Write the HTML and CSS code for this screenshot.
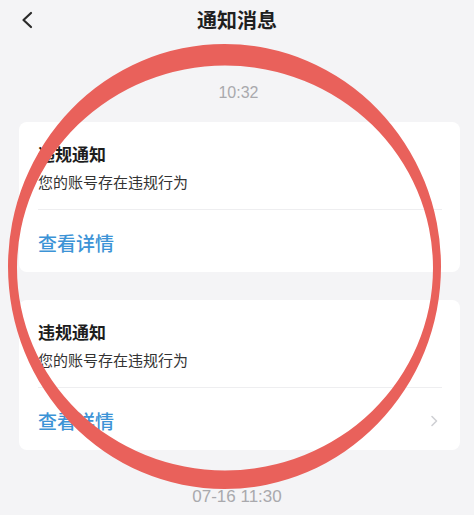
FILE: index.html
```html
<!DOCTYPE html>
<html lang="zh">
<head>
<meta charset="utf-8">
<link rel="stylesheet" href="styles.css">
</head>
<body>
<div class="page">
  <header class="header">
    <div class="back">
      <svg width="14" height="18" viewBox="0 0 14 18"><path d="M11 2 L3.5 9 L11 16" fill="none" stroke="#2a2a2a" stroke-width="2.2" stroke-linecap="round" stroke-linejoin="round"/></svg>
    </div>
    <h1 class="title">通知消息</h1>
    <div></div>
  </header>

  <div class="time first">10:32</div>

  <div class="card">
    <div class="card-title">违规通知</div>
    <div class="card-desc">您的账号存在违规行为</div>
    <div class="divider"></div>
    <div class="link-row"><span class="link">查看详情</span></div>
  </div>

  <div class="card second">
    <div class="card-title">违规通知</div>
    <div class="card-desc">您的账号存在违规行为</div>
    <div class="divider"></div>
    <div class="link-row"><span class="link">查看详情</span>
      <svg class="chev" width="8" height="12" viewBox="0 0 8 12"><path d="M2 1.5 L6.5 6 L2 10.5" fill="none" stroke="#cfd0d4" stroke-width="1.6" stroke-linecap="round" stroke-linejoin="round"/></svg>
    </div>
  </div>

  <div class="time last">07-16 11:30</div>

  <svg class="circle" width="474" height="515" viewBox="0 0 474 515">
    <path fill="#e9615b" fill-rule="evenodd" d="M8 266.5 A216.5 222.5 0 1 0 441 266.5 A216.5 222.5 0 1 0 8 266.5 Z M17 268 A208 202.5 0 1 1 433 268 A208 202.5 0 1 1 17 268 Z"/>
  </svg>
</div>
</body>
</html>
```
FILE: styles.css
```css
html, body {
  margin: 0;
  padding: 0;
}
body {
  background: #f4f4f6;
  font-family: "Noto Sans CJK SC", "Noto Sans", sans-serif;
  width: 474px;
  height: 515px;
  overflow: hidden;
}
.page {
  position: relative;
  width: 474px;
  height: 515px;
}
.header {
  height: 40px;
  display: grid;
  grid-template-columns: 1fr auto 1fr;
  align-items: center;
}
.back {
  padding-left: 20px;
  display: flex;
  align-items: center;
  height: 40px;
}
.title {
  margin: 0;
  font-size: 20px;
  font-weight: 700;
  color: #1f1f1f;
  line-height: 40px;
}
.time {
  text-align: center;
  color: #a9a9ad;
  font-family: "Liberation Sans", "Noto Sans CJK SC", sans-serif;
  font-size: 16px;
  line-height: 20px;
}
.time.first {
  margin-top: 43px;
  padding-left: 3px;
}
.time.last {
  margin-top: 37px;
  font-size: 17px;
}
.card {
  margin: 19px 14px 0 19px;
  background: #ffffff;
  border-radius: 8px;
  padding: 21px 18px 16px 19px;
}
.card.second {
  margin-top: 28px;
}
.card-title {
  font-size: 17px;
  font-weight: 700;
  line-height: 22px;
  color: #1d1d1d;
}
.card-desc {
  margin-top: 6px;
  font-size: 15px;
  line-height: 22px;
  color: #333333;
}
.divider {
  margin-top: 16px;
  height: 1px;
  background: #eeeef0;
}
.link-row {
  margin-top: 20px;
  height: 26px;
  display: flex;
  align-items: center;
  justify-content: space-between;
}
.link {
  font-size: 19px;
  line-height: 26px;
  color: #3c93d6;
  font-weight: 500;
}
.chev {
  margin-right: 4px;
}
.circle {
  position: absolute;
  left: 0;
  top: 0;
  pointer-events: none;
}
```
